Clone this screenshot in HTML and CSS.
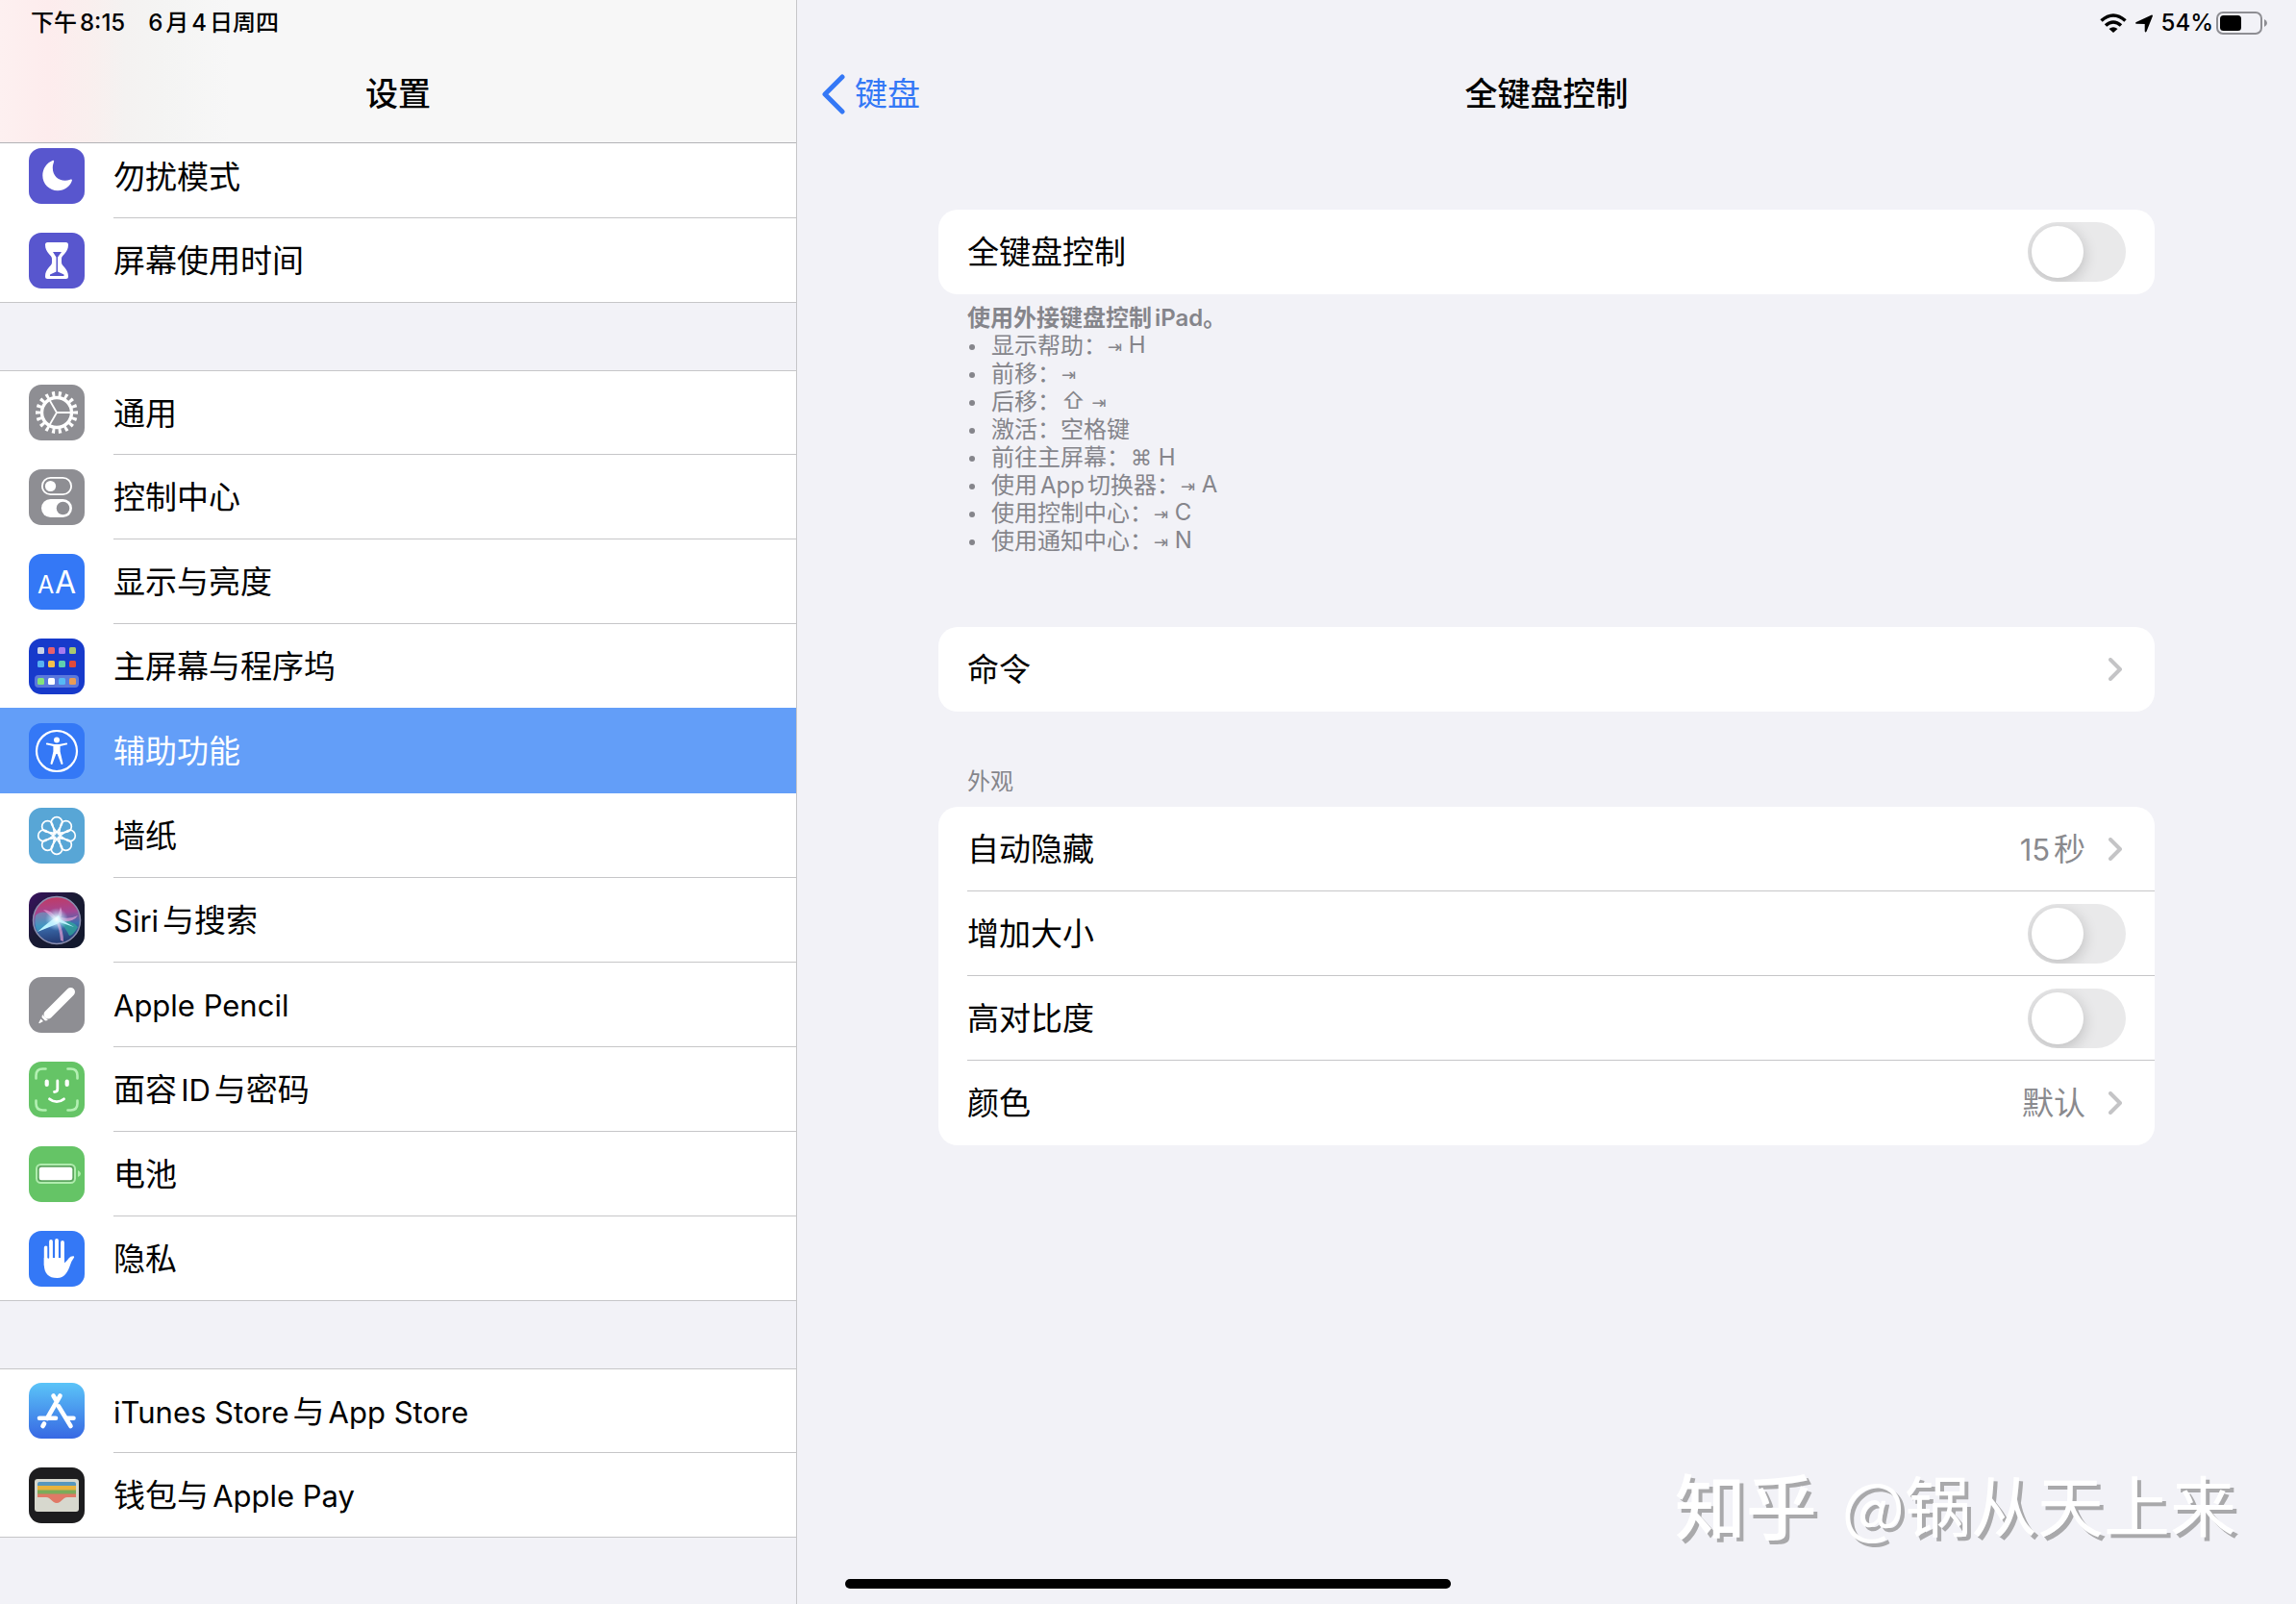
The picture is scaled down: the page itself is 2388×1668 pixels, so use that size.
FILE: index.html
```html
<!DOCTYPE html>
<html lang="zh-CN">
<head>
<meta charset="utf-8">
<meta name="viewport" content="width=device-width, initial-scale=1">
<title>设置</title>
<link rel="stylesheet" href="styles.css">
</head>
<body>
<div class="app">
  <aside class="sidebar">
    <header class="sidebar-header">
      <div class="status"><span>下午8:15</span><span>6月4日周四</span></div>
      <h1 class="title">设置</h1>
    </header>
    <nav class="menu">
      <div class="group">
        <a class="item" href="#dnd">
          <svg class="icon" viewBox="0 0 58 58"><rect width="58" height="58" rx="13" fill="#5856ce"/><path fill="#fff" d="M25 12.800C18.500 15.500 14.300 21.500 14.300 28.500C14.300 37.500 21.500 44.200 30 44.200C37 44.200 43 40 44.900 33.800C45.100 32.600 44 32.400 43 32.800C33.500 36 24.800 30.500 24.800 20.500C24.800 17.500 25.500 16 26 14.500C26.400 13.400 26 12.500 25 12.800Z"/></svg>
          <span class="label">勿扰模式</span>
        </a>
        <a class="item" href="#screen-time">
          <svg class="icon" viewBox="0 0 58 58"><rect width="58" height="58" rx="13" fill="#5856ce"/><path fill="#fff" d="M19.500 10H38.500Q41 10 41 12.500C41 21 34 23 34 27V31C34 35 41 37 41 45.500Q41 48 38.500 48H19.500Q17 48 17 45.500C17 37 24 35 24 31V27C24 23 17 21 17 12.500Q17 10 19.500 10Z"/><path fill="#5856ce" d="M25 20H34L30 25.500V40.500L36.500 43.500V45H22V43.500L28.500 40.500V25.500Z"/></svg>
          <span class="label">屏幕使用时间</span>
        </a>
      </div>
      <div class="group">
        <a class="item" href="#general">
          <svg class="icon" viewBox="0 0 58 58"><rect width="58" height="58" rx="13" fill="#8e8e93"/><g fill="none" stroke="#fff"><circle cx="29" cy="29" r="15.500" stroke-width="3.400"/><circle cx="29" cy="29" r="19.300" stroke-width="5.400" pathLength="360" stroke-dasharray="9 11" stroke-dashoffset="4.500"/><path stroke-width="1.800" d="M29 29H44M29 29L21.500 16M29 29L21.500 42"/></g></svg>
          <span class="label">通用</span>
        </a>
        <a class="item" href="#control-center">
          <svg class="icon" viewBox="0 0 58 58"><rect width="58" height="58" rx="13" fill="#8e8e93"/><rect x="13.900" y="8.900" width="30.200" height="17.200" rx="8.600" fill="none" stroke="#fff" stroke-width="1.800"/><circle cx="22.500" cy="17.500" r="5.600" fill="#fff"/><rect x="13" y="31" width="32" height="19" rx="9.500" fill="#fff"/><circle cx="35.500" cy="40.500" r="6.800" fill="#8e8e93"/></svg>
          <span class="label">控制中心</span>
        </a>
        <a class="item" href="#display">
          <svg class="icon" viewBox="0 0 58 58"><rect width="58" height="58" rx="13" fill="#3478f6"/><text class="icon-text" x="9" y="41" font-size="25">A</text><text class="icon-text" x="27" y="41" font-size="32">A</text></svg>
          <span class="label">显示与亮度</span>
        </a>
        <a class="item" href="#home-screen">
          <svg class="icon" viewBox="0 0 58 58"><rect width="58" height="58" rx="13" fill="#173acb"/><rect x="6" y="38" width="46" height="13" rx="4" fill="#5b78dc"/><g><rect x="9" y="9" width="7" height="7" rx="1.500" fill="#c8d3ea"/><rect x="20" y="9" width="7" height="7" rx="1.500" fill="#e8606c"/><rect x="31" y="9" width="7" height="7" rx="1.500" fill="#a57af0"/><rect x="42" y="9" width="7" height="7" rx="1.500" fill="#a8c870"/><rect x="9" y="23" width="7" height="7" rx="1.500" fill="#57b2f2"/><rect x="20" y="23" width="7" height="7" rx="1.500" fill="#f4c04c"/><rect x="31" y="23" width="7" height="7" rx="1.500" fill="#5fcfae"/><rect x="42" y="23" width="7" height="7" rx="1.500" fill="#e04a3c"/><rect x="9" y="41" width="7" height="7" rx="1.500" fill="#84e27c"/><rect x="20" y="41" width="7" height="7" rx="1.500" fill="#fff"/><rect x="31" y="41" width="7" height="7" rx="1.500" fill="#55b8f5"/><rect x="42" y="41" width="7" height="7" rx="1.500" fill="#e89b55"/></g></svg>
          <span class="label">主屏幕与程序坞</span>
        </a>
        <a class="item selected" href="#accessibility" aria-current="page">
          <svg class="icon" viewBox="0 0 58 58"><rect width="58" height="58" rx="13" fill="#3478f6"/><circle cx="29" cy="29" r="21" fill="none" stroke="#fff" stroke-width="2.200"/><circle cx="29" cy="17.500" r="3" fill="#fff"/><path fill="#fff" d="M18.800 20.600L26.500 21.900H31.500L39.200 20.600Q40.500 20.800 40 22.300L32.600 24V29.500L35.500 42Q35 43.500 33.600 42.700L29.600 32H28.400L24.400 42.700Q23 43.500 22.500 42L25.400 29.500V24L18 22.300Q17.500 20.800 18.800 20.600Z"/></svg>
          <span class="label">辅助功能</span>
        </a>
        <a class="item" href="#wallpaper">
          <svg class="icon" viewBox="0 0 58 58"><rect width="58" height="58" rx="13" fill="#58a6d6"/><g fill="none" stroke="#fff" stroke-width="1.700"><path id="petal" d="M29 26C27 21.500 23.200 19 23.200 15.500A5.800 5.800 0 0 1 34.800 15.500C34.800 19 31 21.500 29 26Z"/><use href="#petal" transform="rotate(45 29 29)"/><use href="#petal" transform="rotate(90 29 29)"/><use href="#petal" transform="rotate(135 29 29)"/><use href="#petal" transform="rotate(180 29 29)"/><use href="#petal" transform="rotate(225 29 29)"/><use href="#petal" transform="rotate(270 29 29)"/><use href="#petal" transform="rotate(315 29 29)"/><circle cx="29" cy="29" r="3.500"/></g></svg>
          <span class="label">墙纸</span>
        </a>
        <a class="item" href="#siri">
          <svg class="icon" viewBox="0 0 58 58"><defs><linearGradient id="siri-bg" x1="0" y1="0" x2="1" y2="1"><stop offset="0" stop-color="#3a1260"/><stop offset=".45" stop-color="#191a33"/><stop offset="1" stop-color="#10182c"/></linearGradient><linearGradient id="siri-orb" x1=".4" y1="0" x2=".5" y2="1"><stop offset="0" stop-color="#c23a63"/><stop offset=".35" stop-color="#a24795"/><stop offset=".6" stop-color="#3b6fb0"/><stop offset="1" stop-color="#23366e"/></linearGradient><radialGradient id="siri-glow"><stop offset="0" stop-color="#fff"/><stop offset=".3" stop-color="#d9f6ff" stop-opacity=".8"/><stop offset="1" stop-color="#9fd8ff" stop-opacity="0"/></radialGradient></defs><rect width="58" height="58" rx="13" fill="url(#siri-bg)"/><circle cx="29" cy="29" r="24.500" fill="url(#siri-orb)" stroke="#8c8fb0" stroke-width="1.500"/><path fill="#46c8d8" fill-opacity=".45" d="M7 24C15 17 22 22 29 28C20 33 13 38 9 41Q5 32 7 24Z"/><path fill="#2fae9a" fill-opacity=".7" d="M29 28Q44 28 51 36Q46 45 42 45Q38 36 29 28Z"/><path fill="#e7a0d4" fill-opacity=".7" d="M15 18Q24 18 29 28L33 15Q36 22 33 26Q43 28 51 24Q46 32 31 30Q36 40 36 51L33 50Q32 38 28 30Z"/><path fill="#bdf5ff" d="M9 41Q18 33 25 28L31 24L33 28L47 36L32 31L29 33Z"/><circle cx="29" cy="28" r="12" fill="url(#siri-glow)"/></svg>
          <span class="label"><span class="latin">Siri</span>与搜索</span>
        </a>
        <a class="item" href="#pencil">
          <svg class="icon" viewBox="0 0 58 58"><rect width="58" height="58" rx="13" fill="#8e8e93"/><path d="M43.500 15.500L20 39" stroke="#fff" stroke-width="9" stroke-linecap="round"/><path fill="#fff" d="M14 39L20 45L17 45.500L13.500 42ZM12.500 43.500L15 46L11 48.300Q10 48.300 10.500 47Z"/></svg>
          <span class="label"><span class="latin">Apple Pencil</span></span>
        </a>
        <a class="item" href="#face-id">
          <svg class="icon" viewBox="0 0 58 58"><rect width="58" height="58" rx="13" fill="#65c466"/><g fill="none" stroke-linecap="round"><path stroke="#b4f0b3" stroke-width="2.600" d="M7.500 17.500V14.500Q7.500 7.500 14.500 7.500H17.500M40.500 7.500H43.500Q50.500 7.500 50.500 14.500V17.500M50.500 40.500V43.500Q50.500 50.500 43.500 50.500H40.500M17.500 50.500H14.500Q7.500 50.500 7.500 43.500V40.500"/><path stroke="#fff" stroke-width="4.200" d="M18.700 20.500V24M39.700 20.500V24"/><path stroke="#fff" stroke-width="2.800" d="M29.800 20V28.500Q29.800 31.500 26.500 31.500M21.500 38.800Q29 44.500 36.500 38.800"/></g></svg>
          <span class="label">面容<span class="latin">ID</span>与密码</span>
        </a>
        <a class="item" href="#battery">
          <svg class="icon" viewBox="0 0 58 58"><rect width="58" height="58" rx="13" fill="#65c466"/><rect x="8" y="19" width="40" height="19" rx="4.500" fill="#5ca65e" stroke="#b0ecae" stroke-width="2"/><rect x="10.700" y="21.700" width="34.600" height="13.600" rx="2.500" fill="#fff"/><path fill="#b0ecae" d="M51 25Q54 26.500 54 28.500T51 32Z"/></svg>
          <span class="label">电池</span>
        </a>
        <a class="item" href="#privacy">
          <svg class="icon" viewBox="0 0 58 58"><rect width="58" height="58" rx="13" fill="#3478f6"/><path stroke="#fff" stroke-width="3.800" stroke-linecap="round" d="M17.700 17.500V36M23 11V34M29 10V34M35 12V34"/><path fill="#fff" d="M15.800 28H36.900V33.500Q39.500 31.500 41.500 28.500Q43.500 26 46.700 26.300Q47.800 27 46.500 28.500Q44.500 31 43 35.500C40.500 43 37 49 29.500 49C20.500 49 16 44.500 15.800 35Z"/><path stroke="#3478f6" stroke-width="1.600" stroke-linecap="round" d="M20.300 17V28M26 12V27.500M32 12V27.500"/></svg>
          <span class="label">隐私</span>
        </a>
      </div>
      <div class="group">
        <a class="item" href="#store">
          <svg class="icon" viewBox="0 0 58 58"><defs><linearGradient id="store-bg" x1="0" y1="0" x2="0" y2="1"><stop offset="0" stop-color="#5bc4f8"/><stop offset="1" stop-color="#3768e3"/></linearGradient></defs><rect width="58" height="58" rx="13" fill="url(#store-bg)"/><path fill="none" stroke="#fff" stroke-width="4.600" stroke-linecap="round" d="M32.500 13.500L19 37M25.500 13.500L28.500 18.500M31 24.500L43.500 45M11 36.700H28M40 36.700H46.500M16 42.500L14.500 45"/></svg>
          <span class="label"><span class="latin">iTunes Store</span>与<span class="latin">App Store</span></span>
        </a>
        <a class="item" href="#wallet">
          <svg class="icon" viewBox="0 0 58 58"><rect width="58" height="58" rx="13" fill="#1d1d1f"/><rect x="6" y="12" width="46" height="34" rx="3" fill="#d7d8ce"/><path fill="#5797bd" d="M9 20V17Q9 15 11 15H47Q49 15 49 17V20Z"/><path fill="#e8b33d" d="M9 19H49V24H9Z"/><path fill="#7bab5a" d="M9 23.500H49V28H9Z"/><path fill="#e07866" d="M9 27.500H49V31H40C35 31 34 37 29 37S23 31 18 31H9Z"/></svg>
          <span class="label">钱包与<span class="latin">Apple Pay</span></span>
        </a>
      </div>
    </nav>
  </aside>

  <main class="detail">
    <div class="status status-right">
      <svg class="wifi" viewBox="0 0 28 20"><g fill="none" stroke="#000" stroke-width="3.600"><path d="M1.500 7.500Q14 -3.500 26.500 7.500"/><path d="M6 12.500Q14 5.500 22 12.500"/></g><path d="M9.500 16Q14 12.500 18.500 16L14 20Z"/></svg>
      <svg class="location" viewBox="0 0 18 19"><path d="M17 .4Q18.300 .5 17.800 2L11.500 17.800Q10.300 19.500 9.700 17.500V10L1 9.800Q-.8 9 .8 8Z"/></svg>
      <span class="level">54%<svg class="battery" viewBox="0 0 54 24"><rect x="1" y="1" width="46" height="22" rx="6" fill="none" stroke="#8e8e93" stroke-width="2"/><rect x="4" y="4" width="22" height="16" rx="3.500"/><path fill="#8e8e93" d="M50 8Q53 9.500 53 12T50 16Z"/></svg></span>
    </div>
    <header class="detail-header">
      <a class="back" href="#keyboard"><svg class="back-icon" viewBox="0 0 24 42"><path fill="none" stroke="#3478f6" stroke-width="5" stroke-linecap="round" stroke-linejoin="round" d="M21 3L3 21L21 39"/></svg>键盘</a>
      <h2 class="title">全键盘控制</h2>
    </header>

    <div class="content">
      <section class="section">
        <div class="card">
          <div class="row"><label class="row-label" for="fka">全键盘控制</label><input class="switch" id="fka" type="checkbox" role="switch"></div>
        </div>
        <div class="note">
          <strong>使用外接键盘控制iPad。</strong>
          <ul class="hints">
            <li>显示帮助：<kbd><span class="tab">⇥</span> H</kbd></li>
            <li>前移：<kbd><span class="tab">⇥</span></kbd></li>
            <li>后移：<kbd><span class="shift">⇧</span> <span class="tab">⇥</span></kbd></li>
            <li>激活：空格键</li>
            <li>前往主屏幕：<kbd><span class="command">⌘</span> H</kbd></li>
            <li>使用App切换器：<kbd><span class="tab">⇥</span> A</kbd></li>
            <li>使用控制中心：<kbd><span class="tab">⇥</span> C</kbd></li>
            <li>使用通知中心：<kbd><span class="tab">⇥</span> N</kbd></li>
          </ul>
        </div>
      </section>

      <section class="section commands">
        <div class="card">
          <a class="row" href="#commands"><span class="row-label">命令</span><svg class="chevron" viewBox="0 0 14 24"><path d="M2 2L12 12L2 22"/></svg></a>
        </div>
      </section>

      <section class="section">
        <h3 class="section-title">外观</h3>
        <div class="card">
          <a class="row" href="#auto-hide"><span class="row-label">自动隐藏</span><span class="value"><span class="latin">15</span>秒</span><svg class="chevron" viewBox="0 0 14 24"><path d="M2 2L12 12L2 22"/></svg></a>
          <div class="row"><label class="row-label" for="size">增加大小</label><input class="switch" id="size" type="checkbox" role="switch"></div>
          <div class="row"><label class="row-label" for="contrast">高对比度</label><input class="switch" id="contrast" type="checkbox" role="switch"></div>
          <a class="row" href="#color"><span class="row-label">颜色</span><span class="value">默认</span><svg class="chevron" viewBox="0 0 14 24"><path d="M2 2L12 12L2 22"/></svg></a>
        </div>
      </section>
    </div>
  </main>

  <div class="watermark"><b>知乎</b><span>@锅从天上来</span></div>
  <div class="home-indicator"></div>
</div>
</body>
</html>
```

FILE: styles.css
```css
* {
  box-sizing: border-box;
}

body {
  margin: 0;
  background: #f2f2f7;
  color: #000;
  font-family: Inter, "Noto Sans CJK SC", sans-serif;
  font-size: 33px;
  line-height: 1.2;
  text-autospace: normal;
}

a {
  color: inherit;
  text-decoration: none;
}

.app {
  position: relative;
  display: grid;
  grid-template-columns: 829px 1fr;
  min-height: 100vh;
}

/* Inter runs wide next to the Chinese text */
.latin {
  font-size: 31px;
}

/* Shared header parts */

.status {
  display: flex;
  align-items: center;
  gap: 24px;
  height: 48px;
  padding: 0 32px;
  font-size: 24px;
  line-height: 48px;
  font-weight: 500;
}

.title {
  margin: 0;
  font-size: 34px;
  line-height: 100px;
  font-weight: 500;
  text-align: center;
}

/* Sidebar */

.sidebar {
  border-right: 1px solid #c6c6c8;
}

.sidebar-header {
  position: relative;
  z-index: 1;
  border-bottom: 1px solid #b2b2b6;
  background: linear-gradient(90deg, #fdf0f0 0, #fdeced 50px, #f9efee 95px, #f4f2f1 130px, #f4f4f3 170px, #f7f7f7 240px);
}

.menu {
  display: flex;
  flex-direction: column;
  gap: 70px;
  margin-top: -10px;
}

.group {
  background: #fff;
}

.item {
  display: flex;
  gap: 30px;
  height: 88px;
  padding-left: 30px;
}

.item:first-child {
  border-top: 1px solid #c6c6c8;
}

.item:last-child {
  border-bottom: 1px solid #c6c6c8;
}

.icon {
  flex: none;
  width: 58px;
  height: 58px;
  margin-top: 15px;
}

.item:first-child .icon {
  margin-top: 14px;
}

.icon-text {
  fill: #fff;
  font-family: Inter, sans-serif;
}

.label {
  flex: 1;
  border-bottom: 1px solid #c6c6c8;
  line-height: 88px;
  white-space: nowrap;
}

.item:last-child .label,
.selected .label,
.item:has(+ .selected) .label {
  border-bottom: 0;
}

.selected {
  background: #639ef8;
  box-shadow: 0 -1px #639ef8;
  color: #fff;
}

/* Detail pane */

.status-right {
  justify-content: flex-end;
  gap: 9px;
  padding: 0 29px;
}

.level {
  display: flex;
  align-items: center;
  gap: 3px;
}

.wifi {
  width: 28px;
  height: 20px;
}

.location {
  width: 18px;
  height: 19px;
}

.battery {
  width: 54px;
  height: 24px;
}

.detail-header {
  display: grid;
  grid-template-columns: 1fr auto 1fr;
  height: 100px;
  padding: 0 26px;
}

.back {
  display: flex;
  align-items: center;
  gap: 10px;
  color: #3478f6;
  font-size: 34px;
  line-height: 100px;
}

.back-icon {
  width: 24px;
  height: 42px;
}

.content {
  padding: 70px 147px;
}

.card {
  overflow: hidden;
  border-radius: 20px;
  background: #fff;
}

.row {
  display: flex;
  align-items: center;
  height: 88px;
  margin-left: 30px;
  padding-right: 30px;
  border-bottom: 1px solid #c6c6c8;
}

.row:last-child {
  border-bottom: 0;
}

.row-label {
  flex: 1;
  padding-top: 2px;
}

.value {
  margin-right: 24px;
  padding-top: 2px;
  color: #8a8a8e;
}

.chevron {
  width: 14px;
  height: 24px;
  margin-right: 4px;
  fill: none;
  stroke: #c4c4c6;
  stroke-width: 4;
  stroke-linecap: round;
  stroke-linejoin: round;
}

.switch {
  appearance: none;
  width: 102px;
  height: 62px;
  margin: 0;
  padding: 4px;
  border-radius: 31px;
  background: #e9e9ea;
  overflow: hidden;
}

.switch::before {
  content: "";
  display: block;
  width: 54px;
  height: 54px;
  border-radius: 50%;
  background: #fff;
  box-shadow: 0 4px 16px rgba(0, 0, 0, 0.2);
}

.switch:checked {
  background: #65c466;
}

.switch:checked::before {
  margin-left: 40px;
}

.note {
  padding: 10px 30px 0;
  color: #85858b;
  font-size: 24px;
  line-height: 29px;
}

.note strong {
  display: block;
  font-weight: 600;
}

.hints {
  margin: 0;
  padding: 0;
  list-style: none;
}

.hints li {
  display: flex;
  align-items: center;
  height: 29px;
}

.hints li::before {
  content: "";
  width: 6px;
  height: 6px;
  margin: 2px 17px 0 2px;
  border-radius: 50%;
  background: #85858b;
}

.hints kbd {
  padding-left: 1px;
  font: inherit;
}

.tab {
  font-family: "DejaVu Sans", sans-serif;
  font-size: 18px;
}

.shift {
  font-family: Inter, "DejaVu Sans", sans-serif;
}

.command {
  font-family: "DejaVu Sans", sans-serif;
  font-size: 22px;
}

.commands {
  padding: 75px 0 56px;
}

.section-title {
  margin: 0;
  padding: 0 30px 9px;
  color: #85858b;
  font-size: 24px;
  line-height: 34px;
  font-weight: 400;
}

/* Overlays */

.watermark {
  position: absolute;
  right: 62px;
  bottom: 61px;
  display: flex;
  gap: 26px;
  color: #fff;
  font-family: "Noto Sans CJK SC", sans-serif;
  font-size: 69px;
  line-height: 88px;
  text-autospace: no-autospace;
  text-shadow: 4px 4px #a9a9ab;
}

.watermark b {
  font-size: 74px;
  font-weight: 500;
}

.home-indicator {
  position: absolute;
  bottom: 16px;
  left: 50%;
  width: 630px;
  height: 10px;
  margin-left: -315px;
  border-radius: 5px;
  background: #000;
}
```
